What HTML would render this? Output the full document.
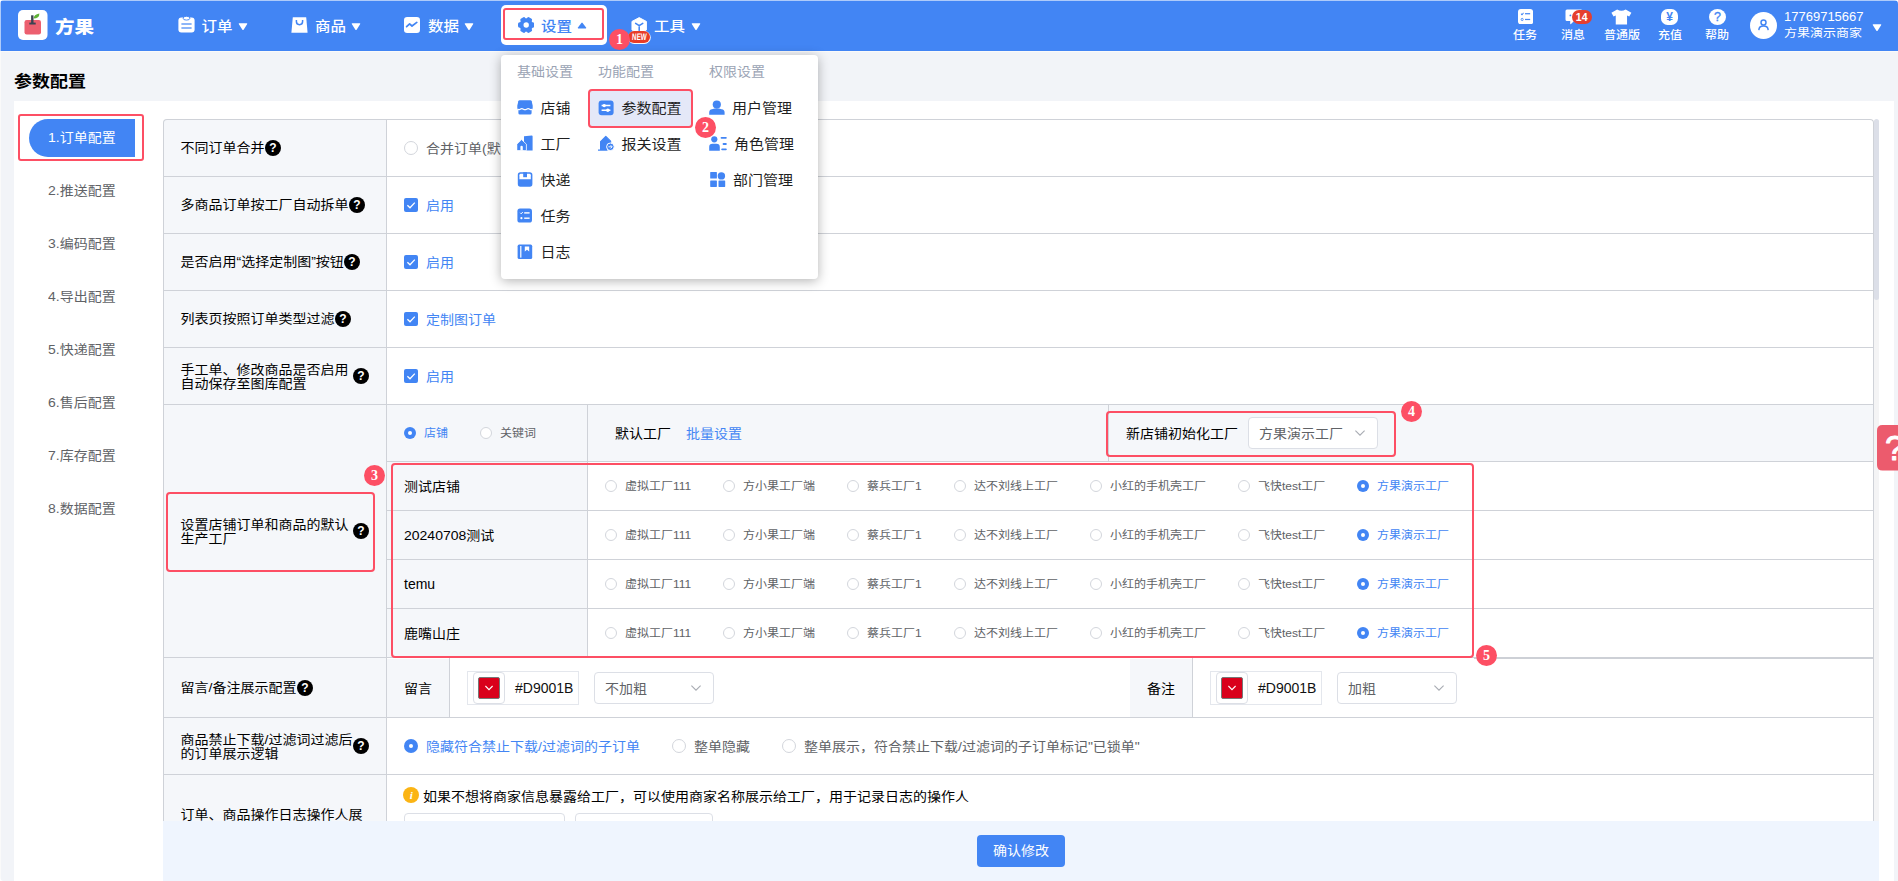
<!DOCTYPE html>
<html lang="zh-CN"><head><meta charset="utf-8"><title>参数配置</title><style>
*{box-sizing:border-box;margin:0;padding:0}
div,span{transform-origin:50% 82%}
html,body{width:1898px;height:881px;overflow:hidden}
body{position:relative;background:#f2f4f8;font-family:"Liberation Sans","Noto Sans CJK SC",sans-serif;font-size:14px;color:#000;line-height:1}
.abs{position:absolute}
.t{transform:scaleY(.9);position:absolute;white-space:nowrap;line-height:20px;height:20px}
#hdr{position:absolute;left:1px;top:0;width:1897px;height:51px;background:#4285f4}
.nav{transform:scaleY(.9);position:absolute;top:15.6px;font-size:15.5px;line-height:20px;height:20px;color:#fff;white-space:nowrap;font-weight:500}
.rt{transform:scaleY(.9);position:absolute;top:25px;font-size:12px;line-height:20px;height:20px;color:#fff;white-space:nowrap;text-align:center;font-weight:500}
#panel{position:absolute;left:14px;top:101px;width:1880px;height:780px;background:#fff}
.side{transform:scaleY(.9);position:absolute;left:48px;font-size:14px;line-height:20px;color:#606266;white-space:nowrap}
.hl{position:absolute;background:#cfd2d8;height:1px}
.vl{position:absolute;background:#cfd2d8;width:1px}
.lab{transform:scaleY(.9);position:absolute;left:180.5px;font-size:14px;color:#000;white-space:nowrap;line-height:15.2px}
.q{position:absolute;width:16px;height:16px}
.cb{position:absolute;width:14px;height:14px;background:#4285f4;border-radius:2px}
.redbox{position:absolute;border:2px solid #fd4f64;border-radius:4px}
.num{position:absolute;width:21px;height:21px;border-radius:50%;background:#fd4f64;color:#fff;font-family:"Liberation Serif",serif;font-size:14px;font-weight:700;line-height:21px;text-align:center}
.r12{position:absolute;width:12px;height:12px;border-radius:50%;border:1px solid #d3d6dc;background:#fff}
.r12.on{border:none;background:#4285f4}
.r12.on::after{content:"";position:absolute;left:4px;top:4px;width:4px;height:4px;border-radius:50%;background:#fff}
.r14{position:absolute;width:14px;height:14px;border-radius:50%;border:1px solid #d3d6dc;background:#fff}
.r14.on{border:none;background:#4285f4}
.r14.on::after{content:"";position:absolute;left:5px;top:5px;width:4px;height:4px;border-radius:50%;background:#fff}
.f12{font-size:12px;color:#606266}
.f14{font-size:14px;color:#606266;margin-top:-.5px}
.side{margin-top:-.7px}
.dd{margin-top:-.5px}
.ddh{margin-top:-1px}
.blue{color:#4285f4}
.sel span{display:inline-block;transform:scaleY(.9);line-height:20px;vertical-align:middle;margin-top:-2.5px}
.sel{position:absolute;height:32px;border:1px solid #dcdfe6;border-radius:4px;background:#fff;font-size:14px;color:#606266;line-height:30px;padding-left:10px;white-space:nowrap}
.dd{transform:scaleY(.9);position:absolute;font-size:15px;line-height:20px;height:20px;color:#1f1f1f;white-space:nowrap}
.ddh{transform:scaleY(.9);position:absolute;font-size:14px;line-height:20px;height:20px;color:#9aa3b4;white-space:nowrap;top:62px}
</style></head><body>
<div id="hdr"></div>
<div class="abs" style="left:0;top:51px;width:1898px;height:1px;background:#fbfaf9"></div>
<div class="abs" style="left:0;top:0;width:1898px;height:1px;background:#aecbfa"></div>
<div class="abs" style="left:0;top:0;width:1px;height:51px;background:#aecbfa"></div>
<div class="abs" style="left:0;top:51px;width:1px;height:830px;background:#fafafa"></div>
<svg class="abs" style="left:0;top:0" width="4" height="4" viewBox="0 0 4 4"><path d="M0 0 H4 Q0 0 0 4Z" fill="#fff"/></svg>
<svg class="abs" style="left:1894px;top:0" width="4" height="4" viewBox="0 0 4 4"><path d="M4 0 H0 Q4 0 4 4Z" fill="#fff"/></svg>
<svg class="abs" style="left:0;top:877px;z-index:50" width="4" height="4" viewBox="0 0 4 4"><path d="M0 4 H4 Q0 4 0 0Z" fill="#fff"/></svg>
<svg class="abs" style="left:18px;top:10px" width="30" height="30" viewBox="0 0 30 30">
<rect x="0" y="0" width="29.5" height="30" rx="5" fill="#fff"/>
<path d="M15.6 8.6 Q15.8 4.6 21.4 3.6 Q21.4 8.6 15.6 8.6Z" fill="#5fb236"/>
<rect x="6.5" y="10" width="16.5" height="14.5" rx="2.2" fill="#ec5f6f"/>
<path d="M14.3 5.3 V13.2" stroke="#3b4352" stroke-width="2.4" fill="none"/><rect x="11.3" y="12.6" width="6.4" height="1.9" fill="#3b4352"/>
</svg>
<div class="abs" style="left:55px;top:13px;font-size:19.5px;line-height:26px;font-weight:900;color:#fff;white-space:nowrap;transform:scaleY(.9)">方果</div>
<svg class="abs" style="left:177.6px;top:16px" width="17" height="17" viewBox="0 0 17 17">
<path d="M3.4 1.6 H13.6 Q16.6 1.6 16.6 4.6 V13.6 Q16.6 16.6 13.6 16.6 H3.4 Q0.4 16.6 0.4 13.6 V4.6 Q0.4 1.6 3.4 1.6Z" fill="#fff"/>
<ellipse cx="8.5" cy="2.2" rx="3.4" ry="1.9" fill="#fff" stroke="#4285f4" stroke-width="0.9"/>
<rect x="3.4" y="7.4" width="10.2" height="1.2" fill="#4285f4"/><rect x="3.4" y="11.4" width="10.2" height="1.2" fill="#4285f4"/>
</svg>
<div class="nav" style="left:201.5px">订单</div>
<svg class="abs" style="left:238px;top:23px" width="10" height="8" viewBox="0 0 10 8"><path d="M1.3 0.3 H8.7 Q9.7 0.3 9.1 1.2 L5.6 6.7 Q5 7.5 4.4 6.7 L0.9 1.2 Q0.3 0.3 1.3 0.3Z" fill="#fff"/></svg>
<svg class="abs" style="left:291px;top:17px" width="17" height="16" viewBox="0 0 17 16">
<path d="M1.8 0.3 H15.2 L16.6 15.7 H0.4Z" fill="#fff"/>
<path d="M5.4 3 V4.6 A3.1 3.1 0 0 0 11.6 4.6 V3" fill="none" stroke="#4285f4" stroke-width="1.5"/>
</svg>
<div class="nav" style="left:315px">商品</div>
<svg class="abs" style="left:351px;top:23px" width="10" height="8" viewBox="0 0 10 8"><path d="M1.3 0.3 H8.7 Q9.7 0.3 9.1 1.2 L5.6 6.7 Q5 7.5 4.4 6.7 L0.9 1.2 Q0.3 0.3 1.3 0.3Z" fill="#fff"/></svg>
<svg class="abs" style="left:404px;top:17px" width="16" height="16" viewBox="0 0 16 16">
<rect x="0" y="0" width="16" height="16" rx="3.2" fill="#fff"/>
<path d="M2.6 9.6 L5.6 6.8 L8 9 L12.8 5.4" fill="none" stroke="#4285f4" stroke-width="1.7" stroke-linecap="round" stroke-linejoin="round"/>
</svg>
<div class="nav" style="left:428px">数据</div>
<svg class="abs" style="left:464px;top:23px" width="10" height="8" viewBox="0 0 10 8"><path d="M1.3 0.3 H8.7 Q9.7 0.3 9.1 1.2 L5.6 6.7 Q5 7.5 4.4 6.7 L0.9 1.2 Q0.3 0.3 1.3 0.3Z" fill="#fff"/></svg>
<div class="abs" style="left:501px;top:5px;width:106px;height:40px;background:#fff;border-radius:5px"></div>
<div class="redbox" style="left:502.5px;top:8px;width:101.5px;height:32px;border-radius:3px"></div>
<svg class="abs" style="left:517.8px;top:17px" width="16.4" height="16" viewBox="0 0 16.4 16">
<g transform="translate(8.2 8)" fill="#4285f4"><circle r="6.7"/>
<rect x="-8.2" y="-2.7" width="16.4" height="5.4" rx="1.7"/>
<rect x="-8.2" y="-2.7" width="16.4" height="5.4" rx="1.7" transform="rotate(60)"/>
<rect x="-8.2" y="-2.7" width="16.4" height="5.4" rx="1.7" transform="rotate(120)"/>
<circle r="2.7" fill="#fff"/></g>
</svg>
<div class="nav" style="left:541px;color:#4285f4">设置</div>
<svg class="abs" style="left:577px;top:22px" width="10" height="7" viewBox="0 0 10 7"><path d="M1.2 6.4 H8.8 Q9.6 6.4 9.1 5.6 L5.6 0.9 Q5 0.2 4.4 0.9 L0.9 5.6 Q0.4 6.4 1.2 6.4Z" fill="#4285f4"/></svg>
<svg class="abs" style="left:630.5px;top:16.8px" width="16.4" height="17.4" viewBox="0 0 17 18">
<path d="M8.5 0.6 L16 4.6 V13.4 L8.5 17.4 L1 13.4 V4.6Z" fill="#fff" stroke="#fff" stroke-width="1" stroke-linejoin="round"/>
<path d="M4.8 6.6 L8.5 9 L12.2 6.6 M8.5 9 V14" fill="none" stroke="#4285f4" stroke-width="1.6" stroke-linecap="round"/>
</svg>
<div class="nav" style="left:654px">工具</div>
<svg class="abs" style="left:691px;top:23px" width="10" height="8" viewBox="0 0 10 8"><path d="M1.3 0.3 H8.7 Q9.7 0.3 9.1 1.2 L5.6 6.7 Q5 7.5 4.4 6.7 L0.9 1.2 Q0.3 0.3 1.3 0.3Z" fill="#fff"/></svg>
<div class="abs" style="left:628.2px;top:30.5px;width:22.2px;height:12.2px;border-radius:7px;background:#e83c28;box-shadow:0.3px 0.5px 0 0.5px rgba(255,255,255,.95);color:#fff;font-size:9.5px;line-height:12.6px;font-weight:700;text-align:center;white-space:nowrap"><span style="display:inline-block;transform:scaleX(0.66) skewX(-6deg);margin-left:-4px;margin-right:-4px">NEW</span></div>
<div class="num" style="left:609px;top:29px">1</div>
<svg class="abs" style="left:1518px;top:9px" width="15.2" height="15.4" viewBox="0 0 16 15" preserveAspectRatio="none">
<rect width="16" height="15" rx="3" fill="#fff"/>
<path d="M3.2 4.6 L4.2 5.6 L5.8 3.8" fill="none" stroke="#4285f4" stroke-width="1"/>
<rect x="7.4" y="4" width="5.4" height="1.2" fill="#4285f4"/>
<circle cx="4.4" cy="10.2" r="1.1" fill="none" stroke="#4285f4" stroke-width="0.9"/>
<rect x="7.4" y="9.6" width="5.4" height="1.2" fill="#4285f4"/>
</svg>
<div class="rt" style="left:1505px;width:40px">任务</div>
<svg class="abs" style="left:1565px;top:9px" width="18" height="16" viewBox="0 0 18 16">
<path d="M2 0.5 H16 Q17.5 0.5 17.5 2 V10.5 Q17.5 12 16 12 H9 L6 15 Q5.2 15.6 5.2 14.6 V12 H2 Q0.5 12 0.5 10.5 V2 Q0.5 0.5 2 0.5Z" fill="#fff"/>
<circle cx="5.4" cy="6.4" r="0.9" fill="#4285f4"/>
</svg>
<div class="abs" style="left:1571.8px;top:9.9px;width:19.8px;height:14.6px;border-radius:7.3px;background:#e53e2e;color:#fff;font-size:10.5px;line-height:14.6px;text-align:center;font-weight:700">14</div>
<div class="rt" style="left:1553px;width:40px">消息</div>
<svg class="abs" style="left:1611.4px;top:9px" width="20.8" height="16" viewBox="0 0 21 16" preserveAspectRatio="none">
<path d="M6.2 0.4 Q10.5 3 14.8 0.4 L20.6 3.8 L18.4 7.6 L16.2 6.6 V15.6 H4.8 V6.6 L2.6 7.6 L0.4 3.8Z" fill="#fff"/>
</svg>
<div class="rt" style="left:1596px;width:52px">普通版</div>
<svg class="abs" style="left:1661px;top:9px" width="17" height="16" viewBox="0 0 17 16">
<rect x="0" y="0" width="17" height="16" rx="6.6" fill="#fff"/>
<text x="8.5" y="12.3" text-anchor="middle" font-family="Liberation Sans, sans-serif" font-weight="700" font-size="12" fill="#4285f4">¥</text>
</svg>
<div class="rt" style="left:1650px;width:40px">充值</div>
<svg class="abs" style="left:1709px;top:9px" width="17" height="16" viewBox="0 0 17 16">
<ellipse cx="8.5" cy="8" rx="8.5" ry="8" fill="#fff"/>
<text x="8.5" y="12.4" text-anchor="middle" font-family="Liberation Sans, sans-serif" font-weight="400" font-size="12.5" fill="#4285f4" stroke="#4285f4" stroke-width="0.3">?</text>
</svg>
<div class="rt" style="left:1697px;width:40px">帮助</div>
<svg class="abs" style="left:1750px;top:12px" width="27" height="27" viewBox="0 0 27 27">
<circle cx="13.5" cy="13.5" r="13.5" fill="#fff"/>
<circle cx="13.5" cy="10.5" r="2.5" fill="none" stroke="#4285f4" stroke-width="1.5"/>
<path d="M8.9 17.6 Q9.1 13.9 13.5 13.9 Q17.9 13.9 18.1 17.6" fill="none" stroke="#4285f4" stroke-width="1.5" stroke-linecap="round"/>
</svg>
<div class="abs" style="left:1784px;top:8px;font-size:13px;line-height:17px;color:#fff;white-space:nowrap;letter-spacing:0">17769715667</div>
<div class="abs" style="left:1784px;top:24px;font-size:13px;line-height:18px;color:#fff;white-space:nowrap;transform:scaleY(.9)">方果演示商家</div>
<svg class="abs" style="left:1872px;top:24px" width="10" height="8" viewBox="0 0 10 8"><path d="M1.3 0.3 H8.7 Q9.7 0.3 9.1 1.2 L5.6 6.7 Q5 7.5 4.4 6.7 L0.9 1.2 Q0.3 0.3 1.3 0.3Z" fill="#fff"/></svg>
<div class="abs" style="left:14px;top:68px;font-size:18px;line-height:26px;font-weight:700;color:#000;white-space:nowrap;transform:scaleY(.9)">参数配置</div>
<div id="panel"></div>
<div class="abs" style="left:29px;top:119px;width:106px;height:38px;background:#4285f4;border-radius:19px 0 0 19px"></div>
<div class="redbox" style="left:18px;top:114px;width:126px;height:47px;border-radius:3px"></div>
<div class="side" style="top:128px;color:#fff">1.订单配置</div>
<div class="side" style="top:181px;color:#606266">2.推送配置</div>
<div class="side" style="top:234px;color:#606266">3.编码配置</div>
<div class="side" style="top:287px;color:#606266">4.导出配置</div>
<div class="side" style="top:340px;color:#606266">5.快递配置</div>
<div class="side" style="top:393px;color:#606266">6.售后配置</div>
<div class="side" style="top:446px;color:#606266">7.库存配置</div>
<div class="side" style="top:499px;color:#606266">8.数据配置</div>
<div class="abs" style="left:163px;top:119px;width:224px;height:703px;background:#f5f7fa;border-top-left-radius:4px"></div>
<div class="abs" style="left:387px;top:405px;width:1486px;height:57px;background:#f5f7fa"></div>
<div class="abs" style="left:387px;top:462px;width:201px;height:196px;background:#f5f7fa"></div>
<div class="abs" style="left:387px;top:658px;width:63px;height:59px;background:#f5f7fa"></div>
<div class="abs" style="left:1130px;top:658px;width:63px;height:59px;background:#f5f7fa"></div>
<div class="abs" style="left:163px;top:119px;width:1711px;height:720px;border:1px solid #cfd2d8;border-bottom:none;border-radius:4px 4px 0 0"></div>
<div class="vl" style="left:386px;top:120px;height:701px"></div>
<div class="hl" style="left:164px;top:176px;width:1709px"></div>
<div class="hl" style="left:164px;top:233px;width:1709px"></div>
<div class="hl" style="left:164px;top:290px;width:1709px"></div>
<div class="hl" style="left:164px;top:347px;width:1709px"></div>
<div class="hl" style="left:164px;top:404px;width:1709px"></div>
<div class="hl" style="left:164px;top:657px;width:1709px"></div>
<div class="hl" style="left:164px;top:717px;width:1709px"></div>
<div class="hl" style="left:164px;top:774px;width:1709px"></div>
<div class="hl" style="left:1474px;top:657px;width:399px;height:2px;background:#cdd0d6"></div>
<div class="hl" style="left:387px;top:658px;width:1087px;background:#fff"></div>
<div class="hl" style="left:387px;top:461px;width:1486px"></div>
<div class="hl" style="left:387px;top:510px;width:1486px"></div>
<div class="hl" style="left:387px;top:559px;width:1486px"></div>
<div class="hl" style="left:387px;top:608px;width:1486px"></div>
<div class="vl" style="left:587px;top:405px;height:253px"></div>
<div class="vl" style="left:1108px;top:405px;height:57px"></div>
<div class="vl" style="left:449px;top:658px;height:59px"></div>
<div class="vl" style="left:1192px;top:658px;height:59px"></div>
<div class="lab" style="top:140.4px">不同订单合并</div>
<svg class="q" style="left:265px;top:140px" viewBox="0 0 16 16"><circle cx="8" cy="8" r="8" fill="#000"/><text x="8" y="12.4" text-anchor="middle" font-family="Liberation Sans, sans-serif" font-weight="700" font-size="12" fill="#fff">?</text></svg>
<div class="lab" style="top:197.4px">多商品订单按工厂自动拆单</div>
<svg class="q" style="left:349px;top:197px" viewBox="0 0 16 16"><circle cx="8" cy="8" r="8" fill="#000"/><text x="8" y="12.4" text-anchor="middle" font-family="Liberation Sans, sans-serif" font-weight="700" font-size="12" fill="#fff">?</text></svg>
<div class="lab" style="top:254.4px">是否启用“选择定制图”按钮</div>
<svg class="q" style="left:344px;top:254px" viewBox="0 0 16 16"><circle cx="8" cy="8" r="8" fill="#000"/><text x="8" y="12.4" text-anchor="middle" font-family="Liberation Sans, sans-serif" font-weight="700" font-size="12" fill="#fff">?</text></svg>
<div class="lab" style="top:311.4px">列表页按照订单类型过滤</div>
<svg class="q" style="left:335px;top:311px" viewBox="0 0 16 16"><circle cx="8" cy="8" r="8" fill="#000"/><text x="8" y="12.4" text-anchor="middle" font-family="Liberation Sans, sans-serif" font-weight="700" font-size="12" fill="#fff">?</text></svg>
<div class="lab" style="top:360.8px">手工单、修改商品是否启用<br>自动保存至图库配置</div>
<svg class="q" style="left:353px;top:368px" viewBox="0 0 16 16"><circle cx="8" cy="8" r="8" fill="#000"/><text x="8" y="12.4" text-anchor="middle" font-family="Liberation Sans, sans-serif" font-weight="700" font-size="12" fill="#fff">?</text></svg>
<div class="lab" style="top:515.8px">设置店铺订单和商品的默认<br>生产工厂</div>
<svg class="q" style="left:353px;top:523px" viewBox="0 0 16 16"><circle cx="8" cy="8" r="8" fill="#000"/><text x="8" y="12.4" text-anchor="middle" font-family="Liberation Sans, sans-serif" font-weight="700" font-size="12" fill="#fff">?</text></svg>
<div class="lab" style="top:680.4px">留言/备注展示配置</div>
<svg class="q" style="left:297px;top:680px" viewBox="0 0 16 16"><circle cx="8" cy="8" r="8" fill="#000"/><text x="8" y="12.4" text-anchor="middle" font-family="Liberation Sans, sans-serif" font-weight="700" font-size="12" fill="#fff">?</text></svg>
<div class="lab" style="top:730.8px">商品禁止下载/过滤词过滤后<br>的订单展示逻辑</div>
<svg class="q" style="left:353px;top:738px" viewBox="0 0 16 16"><circle cx="8" cy="8" r="8" fill="#000"/><text x="8" y="12.4" text-anchor="middle" font-family="Liberation Sans, sans-serif" font-weight="700" font-size="12" fill="#fff">?</text></svg>
<div class="lab" style="top:807px">订单、商品操作日志操作人展</div>
<div class="r14" style="left:404px;top:141px"></div>
<div class="t f14" style="left:426px;top:138px">合并订单(默认)</div>
<svg class="abs" style="left:404px;top:198px" width="14" height="14" viewBox="0 0 14 14"><rect width="14" height="14" rx="2" fill="#4285f4"/><path d="M3.4 7.2 L6 9.8 L10.8 4.6" fill="none" stroke="#fff" stroke-width="1.3"/></svg>
<div class="t f14 blue" style="left:426px;top:195px">启用</div>
<svg class="abs" style="left:404px;top:255px" width="14" height="14" viewBox="0 0 14 14"><rect width="14" height="14" rx="2" fill="#4285f4"/><path d="M3.4 7.2 L6 9.8 L10.8 4.6" fill="none" stroke="#fff" stroke-width="1.3"/></svg>
<div class="t f14 blue" style="left:426px;top:252px">启用</div>
<svg class="abs" style="left:404px;top:312px" width="14" height="14" viewBox="0 0 14 14"><rect width="14" height="14" rx="2" fill="#4285f4"/><path d="M3.4 7.2 L6 9.8 L10.8 4.6" fill="none" stroke="#fff" stroke-width="1.3"/></svg>
<div class="t f14 blue" style="left:426px;top:309px">定制图订单</div>
<svg class="abs" style="left:404px;top:369px" width="14" height="14" viewBox="0 0 14 14"><rect width="14" height="14" rx="2" fill="#4285f4"/><path d="M3.4 7.2 L6 9.8 L10.8 4.6" fill="none" stroke="#fff" stroke-width="1.3"/></svg>
<div class="t f14 blue" style="left:426px;top:366px">启用</div>
<div class="r12 on" style="left:404px;top:427px"></div>
<div class="t f12 blue" style="left:424px;top:423px">店铺</div>
<div class="r12" style="left:480px;top:427px"></div>
<div class="t f12" style="left:500px;top:423px">关键词</div>
<div class="t" style="left:615px;top:423px;font-size:14px;margin-top:-.5px;color:#000">默认工厂</div>
<div class="t blue" style="left:686px;top:423px;font-size:14px;margin-top:-.5px">批量设置</div>
<div class="t" style="left:1126px;top:423px;font-size:14px;margin-top:-.5px;color:#000">新店铺初始化工厂</div>
<div class="sel" style="left:1248px;top:417px;width:130px"><span>方果演示工厂</span></div>
<svg class="abs" style="left:1354px;top:429px" width="12" height="8" viewBox="0 0 12 8"><path d="M1.4 1.6 L6 6.2 L10.6 1.6" fill="none" stroke="#a8abb2" stroke-width="1.1"/></svg>
<div class="t" style="left:404px;top:476px;font-size:14px;margin-top:-.5px;color:#000">测试店铺</div>
<div class="r12" style="left:605px;top:480px"></div>
<div class="t f12" style="left:625px;top:476px">虚拟工厂111</div>
<div class="r12" style="left:723px;top:480px"></div>
<div class="t f12" style="left:743px;top:476px">方小果工厂端</div>
<div class="r12" style="left:847px;top:480px"></div>
<div class="t f12" style="left:867px;top:476px">蔡兵工厂1</div>
<div class="r12" style="left:954px;top:480px"></div>
<div class="t f12" style="left:974px;top:476px">达不刘线上工厂</div>
<div class="r12" style="left:1090px;top:480px"></div>
<div class="t f12" style="left:1110px;top:476px">小红的手机壳工厂</div>
<div class="r12" style="left:1238px;top:480px"></div>
<div class="t f12" style="left:1258px;top:476px">飞快test工厂</div>
<div class="r12 on" style="left:1357px;top:480px"></div>
<div class="t f12 blue" style="left:1377px;top:476px">方果演示工厂</div>
<div class="t" style="left:404px;top:525px;font-size:14px;margin-top:-.5px;color:#000">20240708测试</div>
<div class="r12" style="left:605px;top:529px"></div>
<div class="t f12" style="left:625px;top:525px">虚拟工厂111</div>
<div class="r12" style="left:723px;top:529px"></div>
<div class="t f12" style="left:743px;top:525px">方小果工厂端</div>
<div class="r12" style="left:847px;top:529px"></div>
<div class="t f12" style="left:867px;top:525px">蔡兵工厂1</div>
<div class="r12" style="left:954px;top:529px"></div>
<div class="t f12" style="left:974px;top:525px">达不刘线上工厂</div>
<div class="r12" style="left:1090px;top:529px"></div>
<div class="t f12" style="left:1110px;top:525px">小红的手机壳工厂</div>
<div class="r12" style="left:1238px;top:529px"></div>
<div class="t f12" style="left:1258px;top:525px">飞快test工厂</div>
<div class="r12 on" style="left:1357px;top:529px"></div>
<div class="t f12 blue" style="left:1377px;top:525px">方果演示工厂</div>
<div class="t" style="left:404px;top:574px;font-size:14px;margin-top:-.5px;color:#000;transform:none">temu</div>
<div class="r12" style="left:605px;top:578px"></div>
<div class="t f12" style="left:625px;top:574px">虚拟工厂111</div>
<div class="r12" style="left:723px;top:578px"></div>
<div class="t f12" style="left:743px;top:574px">方小果工厂端</div>
<div class="r12" style="left:847px;top:578px"></div>
<div class="t f12" style="left:867px;top:574px">蔡兵工厂1</div>
<div class="r12" style="left:954px;top:578px"></div>
<div class="t f12" style="left:974px;top:574px">达不刘线上工厂</div>
<div class="r12" style="left:1090px;top:578px"></div>
<div class="t f12" style="left:1110px;top:574px">小红的手机壳工厂</div>
<div class="r12" style="left:1238px;top:578px"></div>
<div class="t f12" style="left:1258px;top:574px">飞快test工厂</div>
<div class="r12 on" style="left:1357px;top:578px"></div>
<div class="t f12 blue" style="left:1377px;top:574px">方果演示工厂</div>
<div class="t" style="left:404px;top:623px;font-size:14px;margin-top:-.5px;color:#000">鹿嘴山庄</div>
<div class="r12" style="left:605px;top:627px"></div>
<div class="t f12" style="left:625px;top:623px">虚拟工厂111</div>
<div class="r12" style="left:723px;top:627px"></div>
<div class="t f12" style="left:743px;top:623px">方小果工厂端</div>
<div class="r12" style="left:847px;top:627px"></div>
<div class="t f12" style="left:867px;top:623px">蔡兵工厂1</div>
<div class="r12" style="left:954px;top:627px"></div>
<div class="t f12" style="left:974px;top:623px">达不刘线上工厂</div>
<div class="r12" style="left:1090px;top:627px"></div>
<div class="t f12" style="left:1110px;top:623px">小红的手机壳工厂</div>
<div class="r12" style="left:1238px;top:627px"></div>
<div class="t f12" style="left:1258px;top:623px">飞快test工厂</div>
<div class="r12 on" style="left:1357px;top:627px"></div>
<div class="t f12 blue" style="left:1377px;top:623px">方果演示工厂</div>
<div class="t" style="left:404px;top:678px;font-size:14px;margin-top:-.5px;color:#000">留言</div>
<div class="abs" style="left:467px;top:671px;width:112px;height:34px;border:1px solid #e4e7ed;background:#fff"></div>
<div class="abs" style="left:473px;top:672px;width:32px;height:32px;border:1px solid #dcdfe6;border-radius:4px;background:#fff"></div>
<div class="abs" style="left:478px;top:677px;width:22px;height:22px;border:1px solid #777;border-radius:2px;background:#d9001b"></div>
<svg class="abs" style="left:483px;top:684px" width="12" height="8" viewBox="0 0 12 8"><path d="M2.4 2 L6 5.6 L9.6 2" fill="none" stroke="#fff" stroke-width="1.1"/></svg>
<div class="t" style="left:515px;top:678.7px;font-size:14px;margin-top:-.5px;color:#111;transform:none">#D9001B</div>
<div class="sel" style="left:594px;top:672px;width:120px"><span>不加粗</span></div>
<svg class="abs" style="left:690px;top:684px" width="12" height="8" viewBox="0 0 12 8"><path d="M1.4 1.6 L6 6.2 L10.6 1.6" fill="none" stroke="#a8abb2" stroke-width="1.1"/></svg>
<div class="t" style="left:1147px;top:678px;font-size:14px;margin-top:-.5px;color:#000">备注</div>
<div class="abs" style="left:1210px;top:671px;width:112px;height:34px;border:1px solid #e4e7ed;background:#fff"></div>
<div class="abs" style="left:1216px;top:672px;width:32px;height:32px;border:1px solid #dcdfe6;border-radius:4px;background:#fff"></div>
<div class="abs" style="left:1221px;top:677px;width:22px;height:22px;border:1px solid #777;border-radius:2px;background:#d9001b"></div>
<svg class="abs" style="left:1226px;top:684px" width="12" height="8" viewBox="0 0 12 8"><path d="M2.4 2 L6 5.6 L9.6 2" fill="none" stroke="#fff" stroke-width="1.1"/></svg>
<div class="t" style="left:1258px;top:678.7px;font-size:14px;margin-top:-.5px;color:#111;transform:none">#D9001B</div>
<div class="sel" style="left:1337px;top:672px;width:120px"><span>加粗</span></div>
<svg class="abs" style="left:1433px;top:684px" width="12" height="8" viewBox="0 0 12 8"><path d="M1.4 1.6 L6 6.2 L10.6 1.6" fill="none" stroke="#a8abb2" stroke-width="1.1"/></svg>
<div class="r14 on" style="left:404px;top:739px"></div>
<div class="t f14 blue" style="left:426px;top:736px">隐藏符合禁止下载/过滤词的子订单</div>
<div class="r14" style="left:672px;top:739px"></div>
<div class="t f14" style="left:694px;top:736px">整单隐藏</div>
<div class="r14" style="left:782px;top:739px"></div>
<div class="t f14" style="left:804px;top:736px">整单展示，符合禁止下载/过滤词的子订单标记"已锁单"</div>
<svg class="abs" style="left:403px;top:787px" width="16" height="16" viewBox="0 0 16 16"><circle cx="8" cy="8" r="8" fill="#fbb414"/><text x="8.2" y="12" text-anchor="middle" font-family="Liberation Serif, serif" font-style="italic" font-weight="700" font-size="11" fill="#fff">i</text></svg>
<div class="t" style="left:423px;top:786px;font-size:14px;margin-top:-.5px;color:#000">如果不想将商家信息暴露给工厂，可以使用商家名称展示给工厂，用于记录日志的操作人</div>
<div class="abs" style="left:404px;top:813px;width:161px;height:32px;border:1px solid #dcdfe6;border-radius:4px;background:#fff"></div>
<div class="abs" style="left:575px;top:813px;width:138px;height:32px;border:1px solid #dcdfe6;border-radius:4px;background:#fff"></div>
<div class="abs" style="left:1874px;top:120px;width:5px;height:701px;background:#f4f4f5"></div>
<div class="abs" style="left:1874px;top:119px;width:5px;height:181px;border-radius:3px;background:#dcdfe8"></div>
<div class="redbox" style="left:166px;top:492px;width:209px;height:80px"></div>
<div class="redbox" style="left:391px;top:463px;width:1083px;height:195px"></div>
<div class="redbox" style="left:1106px;top:411px;width:290px;height:46px"></div>
<div class="num" style="left:364px;top:465px">3</div>
<div class="num" style="left:1401px;top:401px">4</div>
<div class="num" style="left:1476px;top:645px">5</div>
<div class="abs" style="left:163px;top:821px;width:1716px;height:60px;background:#eff5fe"></div>
<div class="abs" style="left:977px;top:835px;width:88px;height:32px;border-radius:4px;background:#4285f4"></div>
<div class="t" style="left:977px;width:88px;text-align:center;top:840.4px;font-size:14px;margin-top:-.5px;color:#fff">确认修改</div>
<svg class="abs" style="left:1877px;top:425px" width="21" height="46" viewBox="0 0 21 46">
<path d="M5.5 0 H21 V45.6 H5.5 Q0 45.6 0 40 V5.5 Q0 0 5.5 0Z" fill="#ec5b6d"/>
<text x="8" y="34.6" font-family="Liberation Sans, sans-serif" font-weight="400" font-size="35" fill="#fff" stroke="#fff" stroke-width="0.9" stroke-linejoin="round">?</text>
</svg>
<div class="abs" style="left:501px;top:55px;width:317px;height:224px;background:#fff;border-radius:4px;box-shadow:0 2px 12px rgba(0,0,0,.3)"></div>
<div class="ddh" style="left:517px">基础设置</div>
<div class="ddh" style="left:598px">功能配置</div>
<div class="ddh" style="left:709px">权限设置</div>
<div class="abs" style="left:588px;top:89px;width:105px;height:39px;background:#e4e8f8;border:2px solid #fd4f64;border-radius:4px"></div>
<svg class="abs" style="left:517px;top:100px" width="16" height="16" viewBox="0 0 16 16"><path d="M2.6 0.3 H13.4 Q14.4 0.3 14.7 1.3 L15.7 5.8 V9.4 H0.3 V5.8 L1.3 1.3 Q1.6 0.3 2.6 0.3Z" fill="#4285f4"/><path d="M1.4 9 H14.6 V13 Q14.6 14.6 13 14.6 H3 Q1.4 14.6 1.4 13Z" fill="#4285f4"/><path d="M0.3 9 Q1.6 10.2 3.2 9.2 Q4.8 8.2 6.4 9.2 Q8 10.2 9.6 9.2 Q11.2 8.2 12.8 9.2 Q14.4 10.2 15.7 9" fill="none" stroke="#fff" stroke-width="1.2"/></svg>
<svg class="abs" style="left:517px;top:135px" width="16" height="16" viewBox="0 0 16 16"><path d="M7 1.2 L14.8 0.4 Q15.6 0.4 15.6 1.2 V15.6 H7Z" fill="#4285f4"/><path d="M4.6 4.6 L9.4 9.2 V15.6 H-0.2 V9.2Z" fill="#4285f4" stroke="#fff" stroke-width="0.8"/><path d="M3.4 15.6 V12 Q3.4 10.8 4.6 10.8 Q5.8 10.8 5.8 12 V15.6Z" fill="#fff"/></svg>
<svg class="abs" style="left:517px;top:172px" width="16" height="16" viewBox="0 0 16 16"><rect x="0.8" y="0.2" width="14.6" height="14.5" rx="2.6" fill="#4285f4"/><path d="M2.4 3.2 Q2.4 1.8 3.8 1.8 H12.4 Q13.8 1.8 13.8 3.2 V7.2 H2.4Z" fill="#fff"/><rect x="6.2" y="0.2" width="3.8" height="5" fill="#4285f4"/></svg>
<svg class="abs" style="left:517px;top:208px" width="16" height="16" viewBox="0 0 16 16"><rect x="0.4" y="0.6" width="14.6" height="14" rx="2.6" fill="#4285f4"/><path d="M3.2 4.8 L4.2 5.8 L5.8 4" fill="none" stroke="#fff" stroke-width="1"/><rect x="7.2" y="4.2" width="5.4" height="1.4" fill="#fff"/><circle cx="4.4" cy="10.2" r="1.1" fill="#fff"/><rect x="7.2" y="9.5" width="5.4" height="1.4" fill="#fff"/></svg>
<svg class="abs" style="left:517px;top:243.5px" width="16" height="16" viewBox="0 0 16 16"><rect x="0.6" y="0.6" width="14.6" height="14.4" rx="1.6" fill="#4285f4"/><rect x="3.2" y="2" width="1.2" height="11.6" fill="#fff"/><path d="M7.8 2.4 H12.2 V7.4 L10 5.8 L7.8 7.4Z" fill="#fff"/></svg>
<div class="dd" style="left:540.6px;top:98px">店铺</div>
<div class="dd" style="left:540.6px;top:134px">工厂</div>
<div class="dd" style="left:540.6px;top:170px">快递</div>
<div class="dd" style="left:540.6px;top:206px">任务</div>
<div class="dd" style="left:540.6px;top:242px">日志</div>
<svg class="abs" style="left:598px;top:100px" width="16" height="16" viewBox="0 0 16 16"><rect x="0.6" y="0.6" width="15" height="14.6" rx="3" fill="#4285f4"/><path d="M3.6 5.6 H12.4 M3.6 10.2 H12.4" stroke="#fff" stroke-width="1.5" fill="none"/><circle cx="6.2" cy="5.6" r="1.7" fill="#fff"/><circle cx="9.8" cy="10.2" r="1.7" fill="#fff"/></svg>
<svg class="abs" style="left:598px;top:135px" width="17" height="17" viewBox="0 0 17 17"><path d="M0.2 15.2 H9 M2.6 15 V6.6 L7.8 1.4 L12.6 6.2 V9 Q8.2 9 8.2 12.6 Q8.2 14 9 15Z" fill="#4285f4" stroke="#4285f4" stroke-width="1.2" stroke-linejoin="round" stroke-linecap="round"/><circle cx="12.4" cy="11.8" r="3.8" fill="#4285f4" stroke="#fff" stroke-width="1"/><path d="M10.4 11.8 H14 M12.6 10.2 L14.2 11.8 L12.6 13.4" stroke="#fff" stroke-width="0.9" fill="none"/></svg>
<div class="dd" style="left:621.6px;top:98px">参数配置</div>
<div class="dd" style="left:621.6px;top:134px">报关设置</div>
<svg class="abs" style="left:709px;top:100px" width="16" height="16" viewBox="0 0 16 16"><circle cx="7.8" cy="4.6" r="4.1" fill="#4285f4"/><path d="M0.2 14.7 V12.4 Q0.2 9.6 3 9.2 L5.6 8.4 H10 L12.6 9.2 Q15.6 9.6 15.6 12.4 V14.7Z" fill="#4285f4"/></svg>
<svg class="abs" style="left:709px;top:136px" width="18" height="16" viewBox="0 0 18 16"><circle cx="5.3" cy="3.3" r="3.1" fill="#4285f4"/><path d="M0.2 14.8 V11 Q0.2 7.8 3.4 7.8 H7.4 Q10.8 7.8 10.8 11 V14.8Z" fill="#4285f4"/><rect x="11.6" y="0.9" width="6.2" height="1.8" rx="0.9" fill="#4285f4"/><rect x="13.6" y="7.1" width="4.2" height="1.8" rx="0.9" fill="#4285f4"/><rect x="12.2" y="12.4" width="5.6" height="1.8" rx="0.9" fill="#4285f4"/></svg>
<svg class="abs" style="left:710px;top:172px" width="16" height="16" viewBox="0 0 16 16"><rect x="0.2" y="0" width="6.7" height="6.6" rx="0.6" fill="#4285f4"/><circle cx="11.4" cy="3.9" r="3.7" fill="#4285f4"/><rect x="0.2" y="8.4" width="6.7" height="6.5" rx="0.6" fill="#4285f4"/><rect x="8.5" y="8.4" width="6.7" height="6.5" rx="0.6" fill="#4285f4"/></svg>
<div class="dd" style="left:732px;top:98px">用户管理</div>
<div class="dd" style="left:734px;top:134px">角色管理</div>
<div class="dd" style="left:733px;top:170px">部门管理</div>
<div class="num" style="left:695px;top:117px">2</div>
</body></html>
